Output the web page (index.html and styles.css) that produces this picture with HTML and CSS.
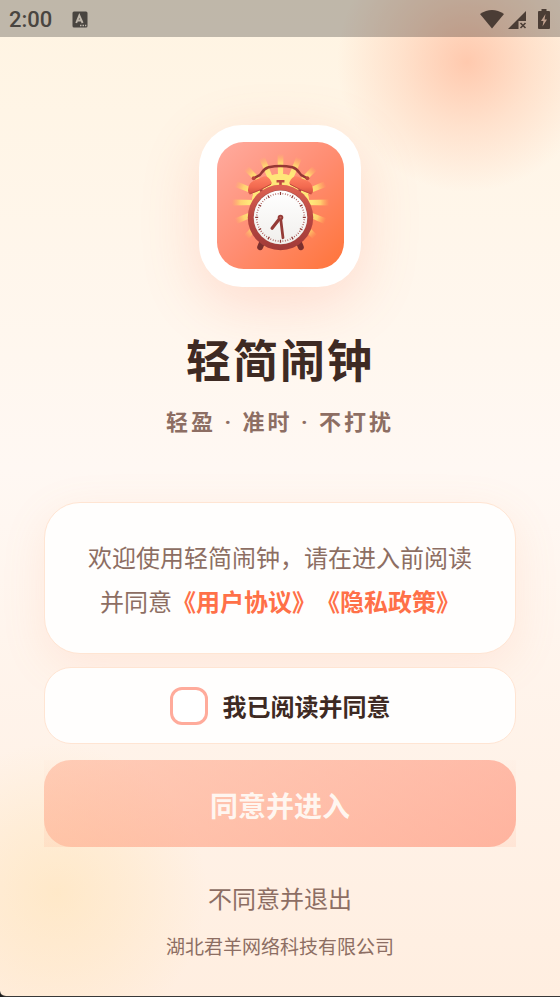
FILE: index.html
```html
<!DOCTYPE html>
<html lang="zh-CN">
<head>
    <meta charset="UTF-8">
    <meta name="viewport" content="width=device-width, initial-scale=1.0">
    <title>轻简闹钟</title>
    <link rel="stylesheet" href="styles.css">
</head>
<body>
    <div class="screen">
        <header class="status-bar">
            <span class="time">2:00</span>
            <svg class="notice" width="16" height="17" viewBox="0 0 16 17">
                <rect x="0.5" y="0.5" width="15" height="16" rx="1.5" fill="#494540"/>
                <path d="M4.2 12 L7.3 4.5 L10.6 12 M5.3 9.5 H9.5" fill="none" stroke="#bfb7ab" stroke-width="1.9"/>
                <path d="M8 14.5 H9.5 M10.5 14.5 H12 M13 14.5 H14.3" stroke="#bfb7ab" stroke-width="1.3"/>
            </svg>
            <svg class="signals" width="72" height="22" viewBox="0 0 72 22">
                <path d="M0 5 Q12 -3 24 5 L12 19.500 Z" fill="#4b3d35"/>
                <path d="M46 2 V12 H38.500 V20 H28 Z" fill="#4b3d35"/>
                <path d="M40.500 14 L45.500 19 M45.500 14 L40.500 19" stroke="#4b3d35" stroke-width="1.6"/>
                <path d="M61.500 0 H66.500 V2 H69 Q70 2 70 3 V19 Q70 20 69 20 H59 Q58 20 58 19 V3 Q58 2 59 2 H61.500 Z" fill="#4b3d35"/>
                <path d="M65.500 5 L61 12 H63.500 L62.500 17.500 L67 10.500 H64.500 Z" fill="#c0a08e"/>
            </svg>
        </header>

        <main class="content">
            <div class="logo">
                <svg viewBox="0 0 128 128">
                    <defs>
                        <linearGradient id="tile" x1="0" y1="0" x2="1" y2="1">
                            <stop offset="0" stop-color="#ffab9f"/>
                            <stop offset="0.5" stop-color="#ff8d72"/>
                            <stop offset="1" stop-color="#ff7439"/>
                        </linearGradient>
                        <radialGradient id="glow" gradientUnits="userSpaceOnUse" cx="64" cy="61" r="49">
                            <stop offset="0.65" stop-color="#ffe779"/>
                            <stop offset="0.82" stop-color="#ffd970" stop-opacity="0.9"/>
                            <stop offset="1" stop-color="#ffc05c" stop-opacity="0"/>
                        </radialGradient>
                        <linearGradient id="bell" x1="0" y1="0" x2="0" y2="1">
                            <stop offset="0" stop-color="#ff8263"/>
                            <stop offset="0.6" stop-color="#f2694f"/>
                            <stop offset="1" stop-color="#d04f40"/>
                        </linearGradient>
                        <linearGradient id="ring" x1="0" y1="0" x2="0" y2="1">
                            <stop offset="0" stop-color="#df6353"/>
                            <stop offset="0.5" stop-color="#b84741"/>
                            <stop offset="1" stop-color="#a03a38"/>
                        </linearGradient>
                        <linearGradient id="face" x1="0" y1="0" x2="0" y2="1">
                            <stop offset="0" stop-color="#ffffff"/>
                            <stop offset="1" stop-color="#f1efec"/>
                        </linearGradient>
                        <g id="rays">
                            <path d="M62 61 L61 12 H67 L66 61 Z"/>
                            <path d="M62 61 L61 12 H67 L66 61 Z" transform="rotate(22.5 64 61)"/>
                            <path d="M62 61 L61 12 H67 L66 61 Z" transform="rotate(45 64 61)"/>
                            <path d="M62 61 L61 12 H67 L66 61 Z" transform="rotate(67.5 64 61)"/>
                        </g>
                        <g id="side">
                            <path d="M43 45 L47 54" stroke="#a63f3a" stroke-width="3"/>
                            <path d="M33 52.500 Q30.500 51 31.500 46.500 Q32.500 41 37 39 L47 34.700 Q52 34 55 40.500 Q55.500 42.500 54 43 Q44 49 33 52.500 Z" fill="url(#bell)"/>
                            <path d="M33 52.500 Q44 48.500 54.500 42.500" fill="none" stroke="#c04a3f" stroke-width="1"/>
                            <path d="M46 100 L43.500 106" stroke="#7b302e" stroke-width="6" stroke-linecap="round"/>
                        </g>
                    </defs>
                    <rect width="128" height="128" rx="27" fill="url(#tile)"/>
                    <g fill="url(#glow)">
                        <circle cx="64" cy="61" r="29" fill="#ffe779"/>
                        <use href="#rays"/>
                        <use href="#rays" transform="rotate(90 64 61)"/>
                        <use href="#rays" transform="rotate(180 64 61)"/>
                        <use href="#rays" transform="rotate(270 64 61)"/>
                    </g>
                    <use href="#side"/>
                    <use href="#side" transform="matrix(-1 0 0 1 128 0)"/>
                    <path d="M36.500 37 L40 35 Q43.500 34 45 31 Q48 26.500 52 25.500 Q64 23 76 25.500 Q80 26.500 83 31 Q84.500 34 88 35 L91.500 37" fill="none" stroke="#963834" stroke-width="2.500"/>
                    <circle cx="37" cy="36.500" r="2" fill="#b8443b"/>
                    <circle cx="91" cy="36.500" r="2" fill="#b8443b"/>
                    <path d="M60 39.500 H68 M64 40 V46" stroke="#bd4a40" stroke-width="2.600"/>
                    <circle cx="64" cy="76" r="33" fill="url(#ring)"/>
                    <circle cx="64" cy="76" r="27.500" fill="#a8524c"/>
                    <circle cx="64" cy="76" r="27" fill="url(#face)"/>
                    <circle cx="64" cy="76" r="24" pathLength="120" fill="none" stroke="#a5524d" stroke-width="1.600" stroke-dasharray="0.6 1.4" stroke-dashoffset="0.3"/>
                    <circle cx="64" cy="76" r="24" pathLength="120" fill="none" stroke="#8f3a36" stroke-width="3" stroke-dasharray="1 9" stroke-dashoffset="0.5"/>
                    <path d="M64 76 L55.500 87" stroke="#953b37" stroke-width="3.200" stroke-linecap="round"/>
                    <path d="M64 76 L66.500 96.500" stroke="#953b37" stroke-width="2.800" stroke-linecap="round"/>
                    <circle cx="64" cy="76" r="2.800" fill="#953b37"/>
                    <circle cx="64" cy="76" r="1" fill="#c26a62"/>
                </svg>
            </div>
            <h1>轻简闹钟</h1>
            <p class="slogan">轻盈 · 准时 · 不打扰</p>

            <section class="card welcome">
                欢迎使用轻简闹钟，请在进入前阅读<br>并同意<a href="#">《用户协议》</a><a href="#">《隐私政策》</a>
            </section>

            <label class="card agree" for="agree">
                <input type="checkbox" id="agree" name="agree">
                <span>我已阅读并同意</span>
            </label>

            <div class="enter-wrap">
                <button type="button" class="enter">同意并进入</button>
            </div>
            <button type="button" class="exit">不同意并退出</button>
            <footer>湖北君羊网络科技有限公司</footer>
        </main>
    </div>
</body>
</html>
```

FILE: styles.css
```css
* {
    box-sizing: border-box;
}
html {
    background-color: #1c1c1c;
}
body {
    margin: 0;
    font-family: "Noto Sans CJK SC", sans-serif;
    color: #3e2a23;
    text-spacing-trim: space-all;
}
.screen {
    min-height: 100vh;
    border-bottom: 1px solid #383838;
    border-bottom-left-radius: 6px;
    background:
        radial-gradient(circle at calc(100% - 93px) 62px, rgba(255, 150, 110, 0.46), rgba(255, 160, 120, 0.23) 65px, rgba(255, 171, 135, 0) 130px),
        radial-gradient(circle at 57px calc(100% - 103px), rgba(255, 213, 130, 0.28), rgba(255, 213, 130, 0.16) 70px, rgba(255, 213, 130, 0) 150px),
        linear-gradient(#fff4e2, #fff8f3 47%, #ffeee0);
}

/* status bar */
.status-bar {
    display: flex;
    align-items: center;
    height: 37px;
    padding: 2px 8px 0 9px;
    background-color: rgba(0, 0, 0, 0.25);
}
.time {
    font-family: Roboto, sans-serif;
    font-size: 22px;
    font-weight: 500;
    color: #494540;
}
.notice {
    margin-left: 20px;
}
.signals {
    margin-left: auto;
}

.content {
    display: flex;
    flex-direction: column;
    align-items: center;
    padding: 88px 44px 34px;
}
.logo {
    width: 162px;
    height: 162px;
    padding: 17px 17px 18px 18px;
    border-radius: 43px;
    background-color: #ffffff;
    box-shadow: 0 16px 60px rgba(255, 112, 80, 0.2);
}
.logo svg {
    display: block;
    width: 100%;
}
h1 {
    margin: 40px 0 0;
    font-size: 45px;
    line-height: 64px;
    letter-spacing: 2px;
}
.slogan {
    margin: 15px 0 62px;
    font-family: Roboto, "Noto Sans CJK SC", sans-serif;
    font-size: 22px;
    font-weight: bold;
    line-height: 34px;
    letter-spacing: 3px;
    color: #8d6e63;
}

.card {
    width: 100%;
    border: 1px solid #ffe5d3;
    background-color: #fffefd;
}
.welcome {
    padding: 32px 42px 30px;
    border-radius: 36px;
    box-shadow: 0 12px 44px rgba(255, 145, 100, 0.13);
    font-size: 24px;
    line-height: 44px;
    text-align: center;
    color: #8d6e63;
}
.welcome a {
    font-weight: bold;
    text-decoration: none;
    color: #ff7048;
}
.agree {
    display: flex;
    align-items: center;
    justify-content: center;
    gap: 15px;
    height: 77px;
    margin: 13px 0 16px;
    border-radius: 27px;
    font-size: 24px;
    font-weight: bold;
}
.agree input {
    appearance: none;
    width: 38px;
    height: 38px;
    margin: 0;
    border: 3px solid #ffab9b;
    border-radius: 12px;
    background-color: #ffffff;
}
.agree input:checked {
    background-color: #ff8a65;
}

/* faint tint behind the rounded button */
.enter-wrap {
    width: 100%;
    background: linear-gradient(rgba(255, 190, 165, 0.03), rgba(255, 180, 150, 0.2));
}
.enter {
    display: block;
    width: 100%;
    height: 87px;
    padding: 2px 0 0;
    border: none;
    border-radius: 27px;
    background: linear-gradient(100deg, rgba(255, 171, 140, 0.52), rgba(255, 138, 112, 0.54));
    font-family: inherit;
    font-size: 28px;
    font-weight: bold;
    color: #fff6f0;
}
.exit {
    margin-top: 29px;
    padding: 0;
    border: none;
    background: none;
    font-family: inherit;
    font-size: 24px;
    line-height: 44px;
    color: #8d6e63;
}
footer {
    margin-top: 11px;
    font-size: 19px;
    line-height: 30px;
    color: #8d6e63;
}
```
